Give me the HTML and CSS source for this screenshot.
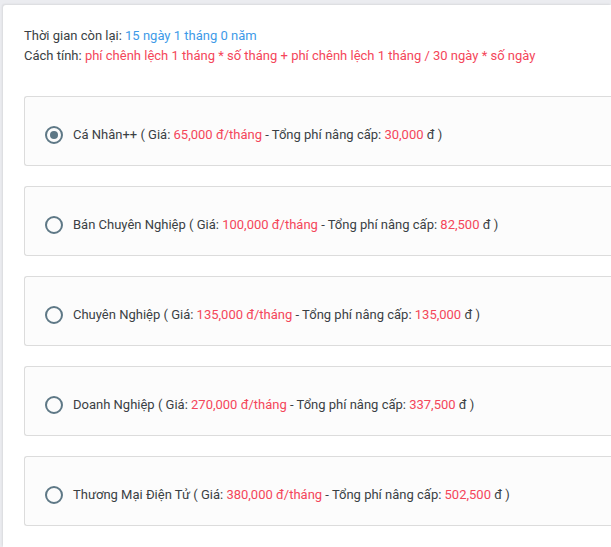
FILE: index.html
```html
<!DOCTYPE html>
<html lang="vi">
<head>
<meta charset="utf-8">
<link rel="stylesheet" href="styles.css">
</head>
<body>
<div class="card">
  <div class="info">
    <div class="line">Thời gian còn lại: <span class="blue">15 ngày 1 tháng 0 năm</span></div>
    <div class="line">Cách tính: <span class="red">phí chênh lệch 1 tháng * số tháng + phí chênh lệch 1 tháng / 30 ngày * số ngày</span></div>
  </div>
  <div class="options">
    <label class="option">
      <span class="radio checked"></span>
      <span class="text">Cá Nhân++ ( Giá: <span class="red">65,000 đ/tháng</span> - Tổng phí nâng cấp: <span class="red">30,000</span> đ )</span>
    </label>
    <label class="option">
      <span class="radio"></span>
      <span class="text">Bán Chuyên Nghiệp ( Giá: <span class="red">100,000 đ/tháng</span> - Tổng phí nâng cấp: <span class="red">82,500</span> đ )</span>
    </label>
    <label class="option">
      <span class="radio"></span>
      <span class="text">Chuyên Nghiệp ( Giá: <span class="red">135,000 đ/tháng</span> - Tổng phí nâng cấp: <span class="red">135,000</span> đ )</span>
    </label>
    <label class="option">
      <span class="radio"></span>
      <span class="text">Doanh Nghiệp ( Giá: <span class="red">270,000 đ/tháng</span> - Tổng phí nâng cấp: <span class="red">337,500</span> đ )</span>
    </label>
    <label class="option">
      <span class="radio"></span>
      <span class="text">Thương Mại Điện Tử ( Giá: <span class="red">380,000 đ/tháng</span> - Tổng phí nâng cấp: <span class="red">502,500</span> đ )</span>
    </label>
  </div>
</div>
</body>
</html>
```
FILE: styles.css
```css
html, body {
  margin: 0;
  padding: 0;
  background: #ebecf0;
}
body {
  font-family: Roboto, "Noto Sans", sans-serif;
  font-size: 13px;
  color: #3a3f44;
  height: 547px;
  padding: 5px 0 0 3px;
  box-sizing: border-box;
  overflow: hidden;
}
.card {
  height: 100%;
  background: #fff;
  border-radius: 3px 0 0 0;
  box-shadow: -1px -1px 2px rgba(0,0,0,0.08);
  padding: 21px 0 0 21px;
  box-sizing: border-box;
}
.line {
  line-height: 20px;
}
.blue { color: #3d9ae8; }
.red { color: #f4465a; }
.options {
  margin-top: 30px;
  display: flex;
  flex-direction: column;
  gap: 20px;
}
.option {
  display: flex;
  align-items: center;
  gap: 10px;
  background: #fcfcfc;
  border: 1px solid #dcdcdc;
  border-right: none;
  border-radius: 3px 0 0 3px;
  padding: 28px 20px 20px 20px;
  line-height: 20px;
}
.radio {
  width: 18px;
  height: 18px;
  box-sizing: border-box;
  border: 2px solid #5e7886;
  border-radius: 50%;
  display: flex;
  align-items: center;
  justify-content: center;
  flex: none;
}
.radio.checked::after {
  content: "";
  width: 8px;
  height: 8px;
  border-radius: 50%;
  background: #5e7886;
}
```
